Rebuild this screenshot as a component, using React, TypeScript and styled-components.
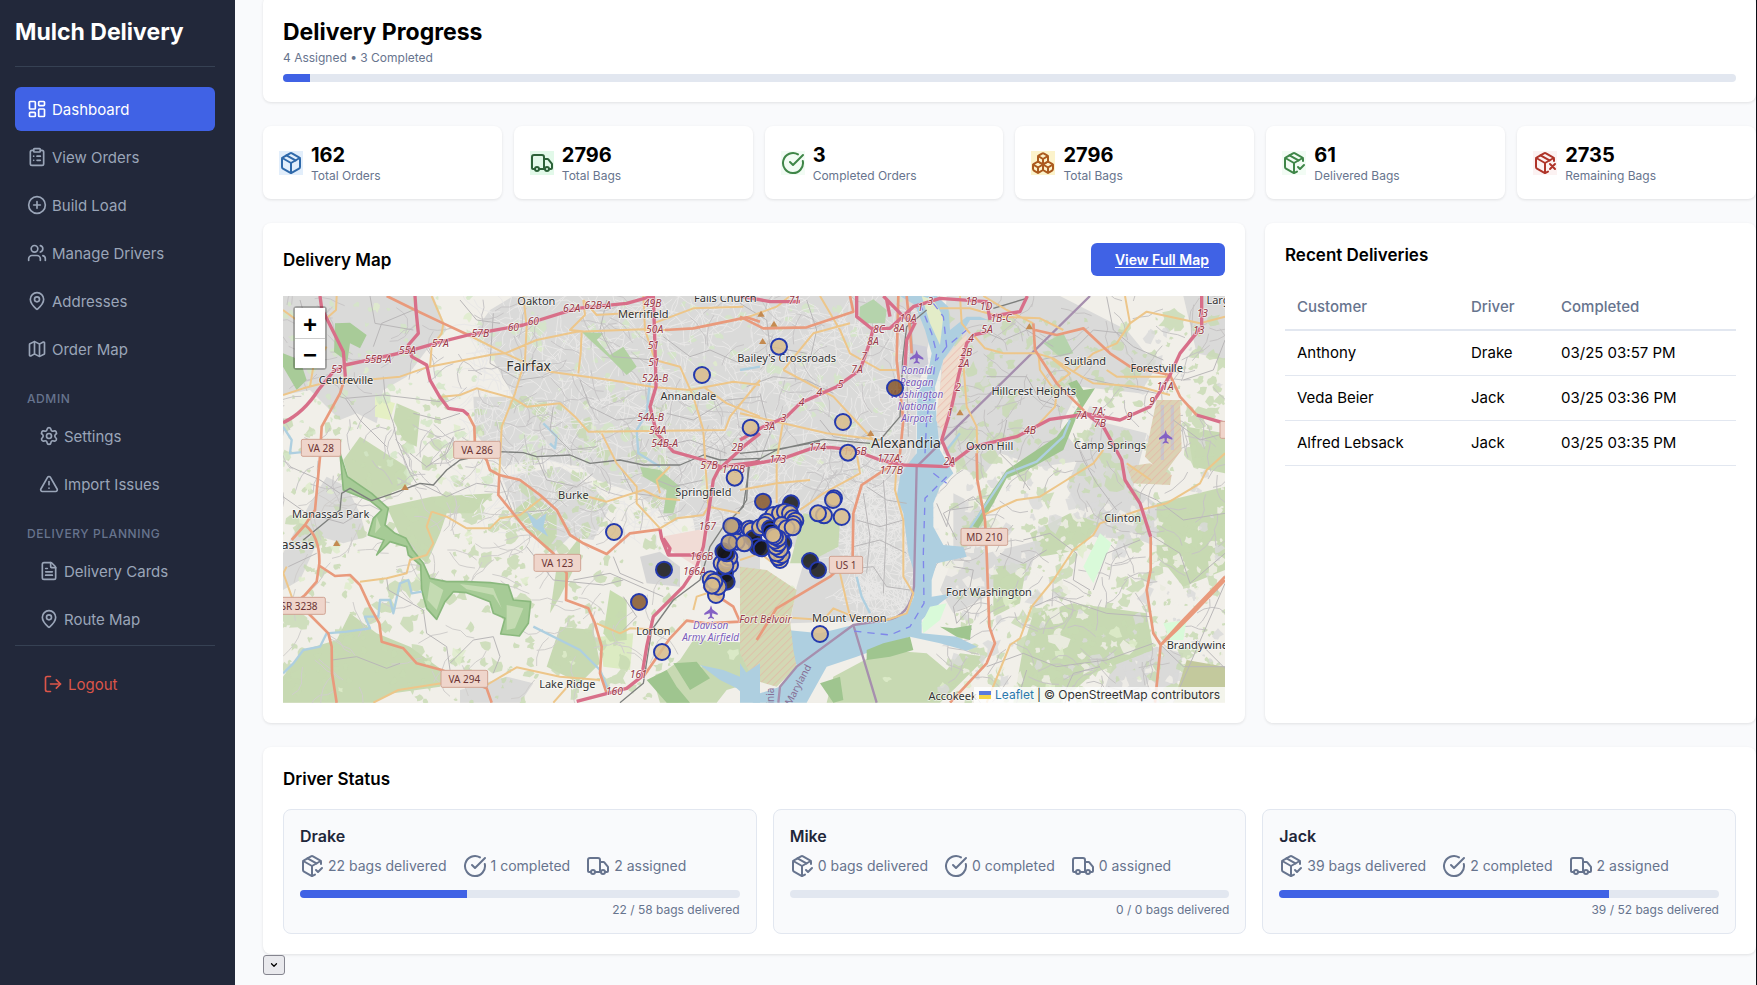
import React from 'react';
import styled, { createGlobalStyle, css } from 'styled-components';
import {
  Boxes, ChevronDown, CircleCheckBig, CirclePlus, ClipboardList, FileText, LayoutDashboard, LogOut,
  Map as MapIcon, MapPin, Package, PackageCheck, PackageX, Settings, TriangleAlert, Truck, Users,
} from 'lucide-react';

const color = {
  navy: '#22283a',
  line: '#364153',
  primary: '#4062e5',
  page: '#f9fafc',
  muted: '#67748e',
  faint: '#9aa5b8',
  track: '#e2e7f0',
  ink: '#1f273a',
  danger: '#dc5549',
};

const GlobalStyle = createGlobalStyle`
  *, *::before, *::after { box-sizing: border-box; }
  body {
    margin: 0;
    background: ${color.page};
    color: #000;
    font-family: Inter, "Noto Sans", sans-serif;
    font-size: 15px;
  }
  h1, h2, h3, p, ul { margin: 0; padding: 0; }
`;

const Shell = styled.div`
  display: flex;
  min-height: 100vh;
  overflow: hidden;
`;

const Sidebar = styled.aside`
  flex: 0 0 235px;
  padding: 16px 20px 16px 15px;
  background: ${color.navy};
`;

const Brand = styled.div`
  padding-bottom: 18px;
  margin-bottom: 20px;
  border-bottom: 1px solid ${color.line};
  color: #fff;
  font-size: 23px;
  font-weight: 700;
  line-height: 32px;
`;

const NavList = styled.ul`
  display: flex;
  flex-direction: column;
  gap: 4px;
  list-style: none;
`;

const NavSection = styled.li`
  padding: 16px 12px 4px;
  color: ${color.muted};
  font-size: 12px;
  font-weight: 500;
  line-height: 15px;
  letter-spacing: 0.05em;
`;

const NavLink = styled.a<{ $active?: boolean; $nested?: boolean }>`
  display: flex;
  align-items: center;
  gap: 5px;
  height: 44px;
  padding: 0 12px;
  border-radius: 6px;
  color: ${color.faint};
  font-size: 15px;
  text-decoration: none;
  ${(p) => p.$nested && css`padding-left: 24px;`}
  ${(p) => p.$active && css`background: ${color.primary}; color: #fff;`}
`;

const LogoutArea = styled.div`
  margin-top: 4px;
  padding: 16px 0 0 16px;
  border-top: 1px solid ${color.line};
`;

const LogoutButton = styled.button`
  display: flex;
  align-items: center;
  gap: 5px;
  height: 44px;
  padding: 0 12px;
  border: 0;
  background: none;
  color: ${color.danger};
  font: inherit;
  font-size: 15px;
`;

const Main = styled.main`
  flex: 1;
  min-width: 0;
  margin-top: -4px;
  padding-left: 28px;
  border-right: 1px solid #0c0f16;
`;

const Stack = styled.div`
  display: flex;
  flex-direction: column;
  gap: 24px;
`;

const Card = styled.section`
  min-width: 0;
  padding: 20px;
  border-radius: 8px;
  background: #fff;
  box-shadow: 0 1px 3px rgba(0, 0, 0, 0.1);
`;

const PageTitle = styled.h1`
  font-size: 23px;
  font-weight: 700;
  line-height: 32px;
`;

const Summary = styled.p`
  margin-bottom: 6px;
  color: ${color.muted};
  font-size: 12px;
  line-height: 20px;
`;

const Track = styled.div`
  height: 8px;
  overflow: hidden;
  border-radius: 4px;
  background: ${color.track};
`;

const Fill = styled.div`
  height: 100%;
  background: ${color.primary};
`;

const StatGrid = styled.div`
  display: grid;
  grid-template-columns: repeat(6, minmax(0, 1fr));
  gap: 12px;
`;

const StatCard = styled(Card)`
  display: flex;
  align-items: center;
  gap: 8px;
  padding: 16px 16px 15px;
`;

const StatIcon = styled.span<{ $fg: string; $bg: string }>`
  display: flex;
  color: ${(p) => p.$fg};
  background: ${(p) => p.$bg};
`;

const StatValue = styled.div`
  font-size: 20px;
  font-weight: 700;
  line-height: 26px;
`;

const StatLabel = styled.div`
  color: ${color.muted};
  font-size: 12px;
  line-height: 16px;
`;

const Columns = styled.div`
  display: grid;
  grid-template-columns: minmax(0, 2fr) minmax(0, 1fr);
  gap: 20px;
`;

const CardHeader = styled.div`
  display: flex;
  align-items: center;
  justify-content: space-between;
  margin-bottom: 20px;
`;

const CardTitle = styled.h2`
  font-size: 17px;
  font-weight: 600;
  line-height: 24px;
`;

const SpacedTitle = styled(CardTitle)`
  margin-bottom: 18px;
`;

const MapLink = styled.a`
  padding: 0 16px 0 24px;
  border-radius: 6px;
  background: ${color.primary};
  color: #fff;
  font-size: 14px;
  font-weight: 600;
  line-height: 33px;
  text-underline-offset: 2px;
`;

const MapFrame = styled.div`
  position: relative;
  height: 407px;
  overflow: hidden;
`;

const MapCanvas = styled.svg`
  display: block;
  width: 100%;
  height: 100%;
`;

const ZoomControl = styled.div`
  position: absolute;
  top: 10px;
  left: 10px;
  display: flex;
  flex-direction: column;
  border: 2px solid rgba(0, 0, 0, 0.25);
  border-radius: 4px;
`;

const ZoomButton = styled.button`
  width: 30px;
  height: 30px;
  padding: 3px 0 0;
  border: 0;
  background: #fff;
  color: #000;
  font: bold 24px/26px "Liberation Sans", sans-serif;
  & + & { border-top: 1px solid #ccc; }
`;

const Attribution = styled.div`
  position: absolute;
  right: 0;
  bottom: 0;
  display: flex;
  align-items: center;
  gap: 3px;
  padding: 0 5px;
  background: rgba(255, 255, 255, 0.8);
  color: #333;
  font-size: 12px;
  line-height: 16px;
  a { display: flex; align-items: center; gap: 4px; color: #2a78ad; text-decoration: none; }
`;

const Table = styled.table`
  width: 100%;
  border-collapse: collapse;
  table-layout: fixed;
  text-align: left;
  font-size: 15px;
  line-height: 20px;
`;

const Th = styled.th<{ $width?: string }>`
  width: ${(p) => p.$width ?? 'auto'};
  padding: 12px;
  border-bottom: 2px solid ${color.track};
  color: ${color.muted};
  font-weight: 500;
`;

const Td = styled.td`
  padding: 12px;
  border-bottom: 1px solid ${color.track};
`;

const DriverGrid = styled.div`
  display: grid;
  grid-template-columns: repeat(3, minmax(0, 1fr));
  gap: 16px;
`;

const DriverCard = styled.article`
  padding: 16px;
  border: 1px solid ${color.track};
  border-radius: 8px;
  background: ${color.page};
`;

const DriverName = styled.h3`
  margin-bottom: 8px;
  color: ${color.ink};
  font-size: 16px;
  font-weight: 600;
  line-height: 20px;
`;

const DriverFacts = styled.div`
  display: flex;
  gap: 16px;
  margin-bottom: 12px;
`;

const Fact = styled.span`
  display: flex;
  align-items: center;
  gap: 4px;
  color: ${color.muted};
  font-size: 14px;
  line-height: 24px;
  white-space: nowrap;
`;

const DriverCaption = styled.p`
  margin-top: 4px;
  color: ${color.muted};
  font-size: 12px;
  line-height: 15px;
  text-align: right;
`;

const MenuPicker = styled.label`
  display: grid;
  width: 22px;
  height: 20px;
  margin-top: 1px;
  place-items: center;
  > * { grid-area: 1 / 1; }
  svg { pointer-events: none; }
`;

const MenuSelect = styled.select`
  width: 22px;
  height: 20px;
  padding: 0;
  appearance: none;
  border: 1px solid #85858f;
  border-radius: 3px;
  background: #e9e9ed;
`;

/* ---------- map drawing ---------- */

type Kind = 'motorway' | 'primary' | 'secondary' | 'minor' | 'rail' | 'border' | 'ferry' | 'stream';

const lineStyle: Record<Kind, { stroke: string; width: number; dash?: string }> = {
  minor: { stroke: '#b9b7b8', width: 3 },
  stream: { stroke: '#aecfe0', width: 7 },
  rail: { stroke: '#7d7f7d', width: 4 },
  secondary: { stroke: '#edc68a', width: 6 },
  primary: { stroke: '#e99a7c', width: 8 },
  motorway: { stroke: '#d86f89', width: 10 },
  border: { stroke: '#a68fae', width: 7 },
  ferry: { stroke: '#7f86ea', width: 4, dash: '22 18' },
};

const layerOrder: Kind[] = ['stream', 'minor', 'border', 'ferry', 'rail', 'secondary', 'primary', 'motorway'];

type Lines = Record<Kind, string[]>;

const westLines: Lines = {
  stream: [
    'M69 1180 L100 1150 L130 1110 L180 1100 L200 1060 L260 1055 L330 1045 L315 1010 L355 1010 L360 960 L390 960 L400 1000 L420 910 L445 900 L455 940 L485 935',
    'M820 1040 L900 1080 L960 1110 L1020 1170 L1045 1230',
    'M1170 300 L1160 400 L1130 450 L1135 520 L1200 560',
    'M850 430 L890 470 L885 505 L870 490',
    'M69 440 L95 480 L90 520 L140 515',
  ],
  minor: [
    'M256 355 L370 345 L540 365', 'M370 345 L400 430 L410 480 L450 580 L470 610', 'M240 350 L256 355 L300 420 L380 500',
    'M460 400 L540 420 L600 400', 'M450 520 L500 560 L560 520 L580 470', 'M480 610 L560 650 L650 610 L720 620',
    'M90 560 L180 600 L240 640', 'M69 650 L140 700 L250 730 L300 700', 'M85 860 L170 820', 'M216 1140 L290 1130 L380 1165 L420 1150',
    'M380 895 L385 930 L490 990 L500 1060 L560 1100 L570 1170', 'M570 1150 L640 1080 L700 1070 L720 1130 L700 1180',
    'M800 800 L880 900 L1030 915 L1090 900', 'M1060 830 L1080 880 L1150 910', 'M940 900 L1050 880 L1210 950',
    'M720 600 L760 700 L860 690 L940 620', 'M1090 950 L1130 1010 L1090 1050', 'M120 60 L140 130 L115 160', 'M330 48 L345 130 L460 150',
    'M340 200 L365 130 L460 90', 'M370 290 L375 345', 'M700 100 L690 250 L780 300 L850 290', 'M600 60 L650 120 L720 130',
    'M1040 60 L1020 150 L1060 230 L1180 240', 'M960 300 L990 380 L1070 420 L1160 410', 'M880 380 L870 450 L930 510 L1010 500',
    'M830 530 L860 600 L950 620 L1000 580', 'M1210 170 L1290 230 L1350 210 L1440 250', 'M1220 400 L1300 420 L1400 360 L1500 350',
    'M1190 600 L1240 620 L1330 600', 'M1200 500 L1290 480 L1400 520', 'M1080 560 L1120 640 L1200 650',
  ],
  border: [],
  ferry: [],
  rail: [
    'M130 780 L240 690 L245 640 L270 625 L335 662 L400 640 L480 610 L520 615 L560 570 L600 540 L720 515 L790 518 L830 530 L930 525 L990 550 L1080 540 L1150 555 L1260 555 L1330 525 L1380 540 L1500 535',
    'M1080 1268 L1150 1210 L1175 1050 L1240 960 L1320 900 L1350 800 L1390 740 L1450 680 L1468 560',
  ],
  secondary: [
    'M69 345 L130 325 L180 312 L420 290 L500 262 L690 225 L735 220 L830 180 L950 155 L1150 148 L1215 150',
    'M625 165 L735 220 L800 250 L870 275 L1050 300 L1185 322 L1290 330 L1420 305 L1500 315',
    'M545 350 L600 345 L650 325 L760 355 L800 380 L900 370 L945 410 L985 455 L1395 450 L1410 410 L1500 300',
    'M790 48 L800 140 L795 240 L765 340 L725 440 L718 585',
    'M1150 48 L1155 150 L1185 240 L1260 260 L1300 350 L1330 450 L1338 580 L1345 680',
    'M1025 460 L1070 550 L1130 620 L1130 670 L1200 745 L1250 715 L1330 705 L1345 680 L1440 700',
    'M985 650 L1040 665 L1150 630 L1200 655 L1260 660',
    'M515 695 L560 710 L620 745 L690 745 L720 715 L780 705 L850 650',
    'M515 695 L500 740 L520 790 L500 825 L450 840 L440 880 L380 895 L300 905',
    'M340 1268 L415 1230 L545 1210 L680 1215 L770 1162 L900 1190 L1020 1200',
    'M965 155 L962 220 L955 280', 'M515 48 L550 130 L545 160 L515 200 L510 262', 'M150 320 L160 260 L200 200',
    'M230 48 L228 90 L200 115', 'M69 90 L110 120', 'M980 155 L930 150 L975 105 L970 60', 'M80 860 L70 880 L97 955',
    'M1010 1030 L1080 1060 L1110 1045 L1230 1050', 'M1200 640 L1190 600 L1230 560', 'M1180 130 L1300 85 L1450 80',
    'M1300 990 L1310 950 L1370 930', 'M970 60 L1010 105 L1170 95', 'M1330 320 L1400 370 L1500 410', 'M880 1268 L940 1200',
  ],
  primary: [
    'M380 48 L465 90 L550 130 L625 165', 'M256 290 L240 340 L185 440 L180 530 L165 690 L135 735 L95 780',
    'M135 735 Q180 770 178 850 L170 905 L135 945 L110 965 L150 1005 L205 1060 L215 1100 L216 1180 L230 1268',
    'M175 855 L225 888 L270 885 L300 915 L330 980 L358 1030 L365 1085 L430 1105 L470 1150 L545 1170 L680 1225 L695 1268',
    'M718 585 L715 645 L800 750 L880 820 L920 880 L918 960 L985 985 L1005 1030 L1025 1100 L1020 1180 L1040 1240',
    'M622 400 L643 440 L645 500 L680 540 L690 570 L718 585 L780 600 L840 645 L890 690 L930 765 L970 790 L1040 822 L1110 760 L1200 748',
    'M1215 150 L1300 145 L1460 112 L1500 125', 'M1150 1190 L1230 1075 L1280 1022 L1340 1030 L1440 1025 L1420 980 L1330 920',
  ],
  motorway: [
    'M180 48 L185 85 L205 125 L250 215 L256 290', 'M69 428 Q130 400 175 330 L220 275 L256 255 L440 215 L545 185 L625 165 L790 135 L950 85 L1100 70 L1180 48',
    'M465 48 L468 90 L475 160 L445 195 L455 230 L500 255 L510 300 L540 352 L565 385 L610 392 L625 405',
    'M1180 48 L1185 200 L1188 320 L1170 380 L1190 460 L1240 515 L1330 540 L1380 560 L1500 545',
    'M1380 560 L1360 600 L1345 700 L1330 800 L1310 860 L1270 920 L1180 1010 L1160 1100 L1145 1190 L1100 1225 L950 1264',
    'M1375 570 L1450 500 L1500 460', 'M1200 748 L1205 775 L1225 825 L1320 825', 'M1210 775 L1230 805 L1225 825',
  ],
};

const eastLines: Lines = {
  stream: ['M680 940 L740 850 L800 760 L890 725 L970 650 L990 600', 'M350 1070 L365 1130 L390 1180', 'M0 450 L60 440', 'M620 690 L660 640'],
  minor: [
    'M0 250 L80 300 L90 380 L200 400', 'M20 500 L100 470 L200 480 L280 520', 'M60 520 L90 640 L60 720', 'M200 240 L230 330 L210 420',
    'M240 600 L280 650 L340 660 L400 640', 'M380 800 L440 840 L500 850', 'M350 900 L420 920 L490 900', 'M340 980 L420 960 L500 1000',
    'M300 1050 L400 1040 L440 1100 L510 1110', 'M370 820 L390 950 L380 1060', 'M430 780 L440 900 L430 1120', 'M510 260 L520 420', 'M500 420 L505 650',
    'M590 850 L620 920 L630 870 L700 860', 'M650 960 L610 880 L700 830 L735 870', 'M640 1040 L700 1050 L690 1100 L640 1160 L650 1210 L730 1120',
    'M720 330 L790 360 L860 330 L940 380', 'M740 470 L860 470 L900 540 L960 560', 'M800 600 L780 700 L820 740 L870 810', 'M900 420 L990 400 L1060 330 L1150 340',
    'M1100 230 L1120 330 L1180 380 L1270 420', 'M1020 470 L1150 500 L1250 520', 'M1000 640 L1030 720 L1070 790 L1130 870', 'M850 960 L930 940 L1010 1000 L1000 1080 L1050 1110',
    'M780 1000 L850 1030 L920 990', 'M880 1160 L950 1130 L1100 1180 L1230 1190', 'M740 1340 L850 1300 L950 1340 L1100 1320 L1240 1270', 'M830 1448 L860 1350',
    'M1160 800 L1250 840 L1330 900 L1455 880', 'M1240 950 L1320 1000 L1350 1090 L1455 1000', 'M1300 600 L1380 660 L1455 640', 'M1330 480 L1420 450 L1455 360',
    'M1060 1110 L1100 1000 L1200 960', 'M960 1448 L1000 1360 L1080 1340', 'M1262 1275 L1330 1340 L1455 1340', 'M1300 1448 L1455 1090', 'M1370 1260 L1455 1345',
  ],
  border: ['M1050 228 L530 740 L522 1100 Q510 1190 440 1200 L340 1215 L170 1340 L120 1400 L115 1448', 'M340 1215 L410 1448'],
  ferry: ['M540 250 L575 340 L590 400 L560 600 L555 700', 'M580 250 L610 290 L620 380 L680 330', 'M620 380 L590 420', 'M620 770 L555 835 L550 1000 L552 1150 L510 1220 L450 1245 L330 1232', 'M580 760 L620 790'],
  rail: ['M0 870 L20 840 L25 735 L110 690 L250 658 L390 670', 'M560 270 L500 320 L488 420 L480 590 L420 660', 'M0 700 L100 690 L240 665', 'M760 265 L860 235'],
  secondary: [
    'M0 300 L110 260 L150 228', 'M240 228 L300 330 L330 400 L420 450 L470 450', 'M130 450 L220 340 L330 310', 'M130 450 L280 530 L400 660', 'M0 580 L130 610 L260 640 L420 660',
    'M130 600 L110 720 L110 850', 'M0 810 L110 790 L210 780', 'M350 700 L360 760 L250 820 L180 870', 'M470 735 L465 810 L490 900 L490 1070 L520 1120 L500 1180 L440 1200 L330 1190 L300 1060',
    'M0 1020 L60 1000 L100 1030', 'M110 1190 L250 1200 L280 1165 L340 1190', 'M660 228 L665 310 L690 340', 'M600 265 L690 265 L780 290 L900 295 L970 330',
    'M700 345 L735 385 L790 400 L890 400 L940 415 L1000 455 L1060 490 L1200 500 L1290 525', 'M670 430 L680 560 L710 620 L712 700', 'M895 400 L900 450 L950 520 L945 560 L870 640',
    'M730 228 L800 270 L880 310', 'M1155 228 L1170 310 L1130 370 L1060 400 L1000 455', 'M1170 310 L1220 275 L1380 310 L1455 290', 'M730 885 L830 840 L900 830 L980 780 L1060 730 L1090 690',
    'M740 1448 L810 1275 L840 1255 L875 1160 L940 1080 L1000 990 L1060 945 L1080 910 L1200 870 L1280 850 L1380 790 L1400 750 L1455 700', 'M1232 780 L1160 730',
    'M935 415 L990 460 L950 490', 'M1100 450 L1130 470 L1290 470',
  ],
  primary: [
    'M475 228 L470 420 L490 600 L480 700 L440 745 L365 795 L340 880 L338 1010 L270 1070 L110 1165 L50 1260', 'M0 290 L70 325 L200 322 L340 275 L330 228',
    'M710 700 L712 780 L735 900 L740 1000 L748 1220 L765 1270 L740 1330 L630 1448', 'M880 310 L885 390 L950 490 L1040 580', 'M885 330 L950 345 L1030 325 L1110 400 L1170 440 L1290 465 L1320 530 L1370 585',
    'M1232 950 L1232 1050 L1220 1110 L1240 1240 L1262 1275 L1245 1448', 'M1262 1275 L1320 1210 L1455 1070', 'M1455 1080 L1350 1190 L1310 1230 L1262 1275', 'M500 228 L510 330 L515 400',
  ],
  motorway: [
    'M0 740 L130 715 L215 685 L270 682 L340 690 L420 720 L490 735 L620 740 L700 680 L830 650 L930 598 L1040 582 L1140 600 L1230 560 L1270 500 L1290 465 L1320 400 L1385 320 L1385 228',
    'M0 660 L70 620 L140 590 L180 550 L290 500 L360 450 L385 380 L400 325 L450 325 L520 260 L600 235 L740 245 L750 300', 'M350 228 L350 290 L400 330', 'M430 228 L490 290 L525 310 L500 360 L495 440',
    'M640 740 L605 660 L635 560 L655 470 L680 370 L700 345 L745 335', 'M745 290 L840 275 L862 228', 'M1040 582 L1090 620 L1145 720 L1155 780 L1200 850 L1232 950', 'M1370 585 L1455 610', 'M440 240 L450 290', 'M0 228 L90 245 L180 245',
  ],
};

type Area = [string, string];

const westAreas: Area[] = [
  ['#dadad9', 'M69 48 H520 L560 150 L500 210 L440 290 L370 330 L350 430 L290 400 L240 420 L150 330 L69 345 Z'],
  ['#dadad9', 'M690 90 L760 48 H1510 V720 L1340 690 L1230 720 L1130 640 L1010 600 L960 560 L830 535 L730 560 L645 460 L640 350 L760 350 L700 240 L640 160 Z'],
  ['#dadad9', 'M725 590 L900 560 L1000 620 L1050 680 L1000 780 L930 770 L880 820 L850 760 L760 680 Z'],
  ['#dadad9', 'M150 670 L200 590 L260 620 L300 700 L320 770 L250 790 L180 770 L120 900 L69 930 V820 Z'],
  ['#d6d6d6', 'M1140 830 L1200 815 L1260 860 L1260 920 L1160 910 Z'],
  ['#dadad9', 'M1230 560 L1500 560 V940 L1330 900 L1300 720 Z'],
  ['#dadad9', 'M600 1230 L740 1190 L820 1210 L780 1268 H600 Z'],
  ['#c7d9b2', 'M410 370 L480 400 L470 500 L430 480 L400 420 Z'],
  ['#e5f0c4', 'M345 350 L405 370 L390 420 L345 410 Z M300 560 L350 520 L370 580 L410 570 L390 610 L310 610 Z'],
  ['#c7d9b2', 'M250 540 L300 470 L440 560 L440 620 L335 660 L280 640 Z'],
  ['#c7d9b2', 'M380 680 L515 650 L700 640 L640 700 L560 700 L540 760 L500 850 L430 790 Z'],
  ['#c7d9b2', 'M750 700 L820 645 L890 700 L890 770 L860 810 Z'],
  ['#c7d9b2', 'M270 1000 L350 1060 L450 1100 L560 1180 L540 1220 L400 1240 L340 1268 H69 V1190 L130 1110 L230 1080 Z'],
  ['#c7d9b2', 'M890 860 L960 770 L960 830 L900 950 L870 1000 Z'],
  ['#dcebc2', 'M1020 1070 L1120 1060 L1110 1170 L1030 1160 Z'],
  ['#c7d9b2', 'M900 1040 L1000 1050 L1020 1150 L960 1210 L860 1160 Z'],
  ['#c7dcaf', 'M1050 930 L1100 960 L1100 1080 L1050 1085 L1030 1060 Z'],
  ['#c7d9b2', 'M1180 1200 L1260 1140 L1300 1080 L1500 1090 V1200 L1400 1230 L1370 1268 H1200 Z'],
];

/* Parks and water that stay clear of the street texture. */
const westTop: Area[] = [
  ['#f1dcd6', 'M1205 770 L1340 745 L1310 860 L1230 810 Z'],
  ['#aecfe0', 'M800 695 L830 720 L860 700 L850 740 L865 770 L820 740 Z'],
  ['#a8cb98', 'M225 130 L270 128 L320 165 L300 205 L270 190 L262 245 L222 215 Z M69 220 L120 240 L140 300 L110 330 L69 260 Z'],
  ['#b2d1a2', 'M965 155 L1030 160 L1010 180 L1050 225 L1090 200 L1130 260 L1100 285 L1050 235 L990 180 Z'],
  ['#b2d1a2', 'M1140 560 L1200 570 L1260 620 L1240 700 L1210 700 L1220 630 L1150 590 Z'],
  ['#9fc58f', 'M1160 1200 L1220 1170 L1250 1220 L1290 1268 H1220 Z M1240 1150 L1310 1145 L1350 1195 L1290 1230 Z'],
  ['#aecfe0', 'M1320 1155 L1390 1170 L1440 1190 L1500 1150 V1268 H1480 L1430 1225 L1380 1200 Z'],
];

const occoquanPark = 'M240 520 L262 590 L335 640 L385 685 L375 735 L405 760 L438 775 L458 810 L490 850 L510 895 L560 905 L620 905 L690 908 L745 915 L760 960 L812 965 L805 1030 L778 1068 L722 1062 L735 1015 L700 1000 L690 965 L620 938 L580 935 L555 965 L530 1018 L500 985 L485 930 L482 855 L445 825 L440 800 L390 785 L350 825 L372 780 L325 765 L340 715 L365 690 L330 662 L250 630 Z';
const occoquanInner = 'M510 905 L550 930 L530 990 L502 960 Z M600 912 L700 925 L725 985 L700 945 L620 928 Z M740 975 L790 985 L765 1045 L740 1050 Z M350 710 L362 740 L345 760 Z';

const hunterPark = 'M985 490 L1010 480 L1030 510 L1065 505 L1010 590 L970 690 L880 740 L800 775 L760 850 L715 925 L695 918 L745 830 L800 750 L950 650 L995 590 L1020 550 Z';
const southParks = 'M600 1220 L640 1225 L695 1215 L690 1260 L650 1250 Z M380 1290 L430 1270 L510 1250 L520 1290 L450 1310 L380 1320 Z M240 1390 L300 1370 L310 1440 L280 1448 Z';
const belvoir = 'M0 1040 L80 1050 L170 1110 L150 1200 L160 1290 L170 1340 L110 1400 L40 1380 L0 1300 Z';
const andrews = 'M1250 540 L1320 540 L1325 690 L1270 765 L1215 710 Z M1160 740 L1230 730 L1295 765 L1290 795 L1180 790 Z';
const bolling = 'M610 420 L680 340 L680 400 L640 560 L610 640 L588 600 Z';
const potomac = 'M480 228 L525 255 L555 330 L575 400 L560 480 L532 520 L530 700 L482 760 L470 830 L490 880 L505 1000 L520 1050 L522 1130 L500 1180 L440 1205 L340 1215 L240 1240 L140 1230 L150 1290 L172 1340 L120 1400 L60 1420 L0 1330 V1448 H200 L260 1340 L350 1310 L430 1280 L510 1250 L600 1270 L680 1292 L712 1280 L650 1250 L545 1240 L545 1200 L600 1150 L640 1120 L575 1130 L575 1080 L590 1030 L680 1010 L670 980 L610 975 L580 920 L580 850 L600 800 L640 760 L600 690 L590 600 L585 500 L610 420 L660 350 L690 300 L745 300 L720 290 L680 290 L630 330 L625 260 L590 228 Z';

const eastAreas: Area[] = [
  ['#dadad9', 'M0 228 H600 L530 520 L520 1180 L440 1200 L150 1210 L170 1100 L200 1000 L0 900 Z'],
  ['#dadad9', 'M620 228 H960 L1160 330 L1250 440 L1200 520 L1020 500 L960 620 L1040 720 L900 740 L780 700 L720 780 L610 700 L600 500 Z'],
  ['#dadad9', 'M1060 600 L1220 640 L1180 800 L1260 860 L1400 900 L1300 1000 L1200 960 L1060 950 L980 800 Z'],
  ['#dadad9', 'M640 820 L720 860 L740 1000 L900 960 L860 1080 L740 1130 L640 1180 L600 1110 L640 1010 Z'],
  ['#dadad9', 'M1120 1330 L1250 1280 L1330 1300 L1300 1448 H1080 Z'],
  ['#dadad9', 'M1330 228 H1455 V420 L1370 400 Z'],
  ['#c7d9b2', 'M870 940 L990 880 L1080 910 L1020 990 L900 1010 Z M760 1040 L860 1030 L840 1150 L760 1190 Z'],
  ['#c7d9b2', 'M880 1180 L1000 1150 L1220 1180 L1240 1290 L1060 1360 L960 1448 H820 L850 1280 Z'],
  ['#c7d9b2', 'M430 1290 L560 1300 L620 1350 L660 1300 L740 1310 L650 1400 L600 1448 H260 L280 1370 Z'],
  ['#c7d9b2', 'M1250 850 L1455 800 V1050 L1330 1100 L1250 1000 Z M1340 620 L1455 640 V760 L1360 740 Z'],
];

const eastTop: Area[] = [
  ['#b5d3ac', 'M360 260 L400 238 L440 270 L435 310 L380 310 L358 290 Z M910 370 L970 340 L1000 400 L960 410 Z'],
  ['#aecfe0', potomac],
  ['#e3ecc8', 'M545 228 L580 240 L610 290 L600 375 L570 310 Z'],
  ['#efdccd', bolling],
  ['#cfcfd8', 'M510 370 L560 380 L565 430 L540 475 L505 460 Z'],
  ['#c7d9b2', 'M190 880 L300 900 L295 980 L200 1030 L150 1030 Z'],
  ['#d3d8b4', belvoir],
  ['#dbd2b4', andrews],
  ['#c9c6cc', 'M1262 555 L1272 555 L1272 720 L1262 720 Z M1292 555 L1302 555 L1302 690 L1292 690 Z'],
  ['#c3c99d', 'M1340 1320 L1455 1340 V1448 H1300 Z'],
  ['#9fc58f', hunterPark],
  ['#9fc58f', southParks],
  ['#d9fad9', 'M570 1160 L620 1150 L600 1200 L550 1240 L545 1210 Z M1080 940 L1115 970 L1060 1090 L1030 1040 Z M1270 1210 L1340 1200 L1330 1260 L1290 1260 Z'],
];

/* Repeatable pseudo-random scatter for woodland patches and street texture. */
function scatter(seed: number) {
  let s = seed;
  return () => {
    s = (s * 16807) % 2147483647;
    return s / 2147483647;
  };
}

function makePatches(seed: number, count: number, box: [number, number, number, number], max = 26) {
  const rnd = scatter(seed);
  let d = '';
  for (let i = 0; i < count; i += 1) {
    const x = box[0] + rnd() * box[2];
    const y = box[1] + rnd() * box[3];
    const size = 5 + rnd() * rnd() * max;
    for (let k = 0; k < 9; k += 1) {
      const a = (k / 9) * Math.PI * 2;
      const r = size * (0.4 + rnd() * 0.9);
      d += `${k ? 'L' : 'M'}${Math.round(x + Math.cos(a) * r)} ${Math.round(y + Math.sin(a) * r)}`;
    }
    d += 'Z';
  }
  return d;
}

function makeStreets(seed: number, count: number, box: [number, number, number, number]) {
  const rnd = scatter(seed);
  let d = '';
  for (let i = 0; i < count; i += 1) {
    let x = box[0] + rnd() * box[2];
    let y = box[1] + rnd() * box[3];
    let a = rnd() * Math.PI * 2;
    d += `M${Math.round(x)} ${Math.round(y)}`;
    for (let k = 0; k < 4; k += 1) {
      a += (rnd() - 0.5) * 1.2;
      x += Math.cos(a) * 24;
      y += Math.sin(a) * 24;
      d += `L${Math.round(x)} ${Math.round(y)}`;
    }
  }
  return d;
}

const woods: Area[] = [
  ['#c7d9b2', makePatches(11, 460, [0, 300, 1180, 920])],
  ['#c7d9b2', makePatches(23, 620, [1990, 60, 836, 1160])],
  ['#d3e6c6', makePatches(37, 300, [0, 0, 1850, 560], 20)],
  ['#f1efe9', makePatches(41, 220, [2000, 560, 826, 640])],
  ['#dfeccb', makePatches(59, 90, [0, 0, 2826, 1200])],
  ['#dadad9', makePatches(61, 190, [1950, 100, 876, 1100])],
];

const streets: [string, string][] = [
  ['#e9e8e7', makeStreets(5, 900, [560, 0, 1330, 700])],
  ['#e9e8e7', makeStreets(15, 260, [1700, 560, 180, 400])],
  ['#c8c6c7', makeStreets(7, 230, [0, 0, 1850, 640])],
  ['#c6c4c4', makeStreets(17, 190, [1980, 0, 846, 1221])],
  ['#d0cecc', makeStreets(29, 110, [0, 560, 1150, 640])],
];

type Label = [number, number, string, number?];

const westPlaces: Label[] = [
  [829, 75, 'Oakton'], [1150, 114, 'Merrifield'], [1396, 66, 'Falls Church'], [806, 272, 'Fairfax', 42], [258, 312, 'Centreville'],
  [1285, 360, 'Annandale'], [940, 657, 'Burke'], [1330, 647, 'Springfield'], [212, 714, 'Manassas Park'], [73, 806, 'Manassas', 39],
  [1180, 1065, 'Lorton'], [922, 1225, 'Lake Ridge'],
];

const eastPlaces: Label[] = [
  [140, 427, "Bailey's Crossroads"], [1035, 436, 'Suitland'], [1250, 456, 'Forestville'], [881, 525, 'Hillcrest Heights'],
  [498, 684, 'Alexandria', 42], [749, 691, 'Oxon Hill'], [1110, 688, 'Camp Springs'], [1148, 905, 'Clinton'],
  [747, 1128, 'Fort Washington'], [328, 1206, 'Mount Vernon'], [1372, 1288, 'Brandywine'], [638, 1440, 'Accokeek'], [1444, 252, 'Largo'],
];

const westExits: Label[] = [
  [935, 96, '62A'], [1013, 86, '62B-A'], [1178, 82, '49B'], [760, 152, '60'], [820, 136, '60'], [661, 172, '57B'], [541, 202, '57A'],
  [442, 222, '55A'], [354, 248, '55B-A'], [230, 280, '53'], [1184, 158, '50A'], [1180, 207, '51'], [1182, 259, '51'], [1185, 307, '52A-B'],
  [1172, 424, '54A-B'], [1193, 462, '54A'], [1214, 501, '54B-A'], [1432, 514, '2B'], [1347, 566, '57B'], [1420, 578, '170B'],
  [1342, 751, '167'], [1325, 839, '166B'], [1303, 886, '166A'], [1135, 1195, '161'], [1063, 1246, '160'],
];

const eastExits: Label[] = [
  [163, 253, '71'], [541, 272, '1'], [571, 256, '3'], [694, 256, '1B'], [738, 269, '1D'], [504, 306, '10A'], [783, 305, '1B-C'], [417, 338, '8C'],
  [477, 336, '8A'], [741, 340, '5A'], [399, 376, '8A'], [693, 367, '4'], [679, 408, '2B'], [671, 440, '2A'], [372, 420, '7'], [351, 459, '7A'],
  [302, 505, '5'], [238, 527, '4'], [185, 557, '4'], [131, 605, '3'], [88, 629, '3A'], [654, 512, '2'], [630, 588, '1'], [232, 693, '174'],
  [345, 704, '176B'], [113, 730, '173'], [450, 725, '177A;'], [454, 761, '177B'], [628, 736, '2A'], [870, 641, '4B'], [1024, 597, '7A'],
  [1076, 585, '7A;'], [1080, 620, '7B'], [1169, 599, '9'], [1236, 556, '9'], [1275, 509, '11A'], [1376, 343, '13'], [1387, 292, '13'], [76, 1208, 'Fort Belvoir'],
];

const airLabels: Label[] = [
  [530, 463, 'Ronald'], [530, 499, 'Reagan'], [530, 535, 'Washington'], [530, 571, 'National'], [530, 607, 'Airport'],
];

const shields: [number, number, string, number][] = [
  [183, 504, 'VA 28', 118], [651, 510, 'VA 286', 140], [892, 849, 'VA 123', 140], [613, 1197, 'VA 294', 140], [117, 978, 'SR 3238', 158],
  [1758, 855, 'US 1', 100], [2173, 771, 'MD 210', 140], [2950, 450, 'MD 4', 140],
];

const peaks: [number, number][] = [[435, 620], [230, 788], [1503, 100], [1542, 130], [1508, 182], [2308, 138], [1832, 458], [2100, 396]];

const tan = '#d8bc8c';
const brown = '#85562c';
const black = '#141419';

/* Delivery stops, in drawing order: x, y, fill. */
const stops: [number, number, string][] = [
  [1326, 285, tan], [1472, 443, tan], [1424, 593, tan], [1062, 756, tan], [1212, 869, black], [1137, 966, brown], [1206, 1116, tan],
  [1557, 200, tan], [1905, 324, brown], [1749, 426, tan], [1764, 518, tan], [1509, 665, brown], [1593, 670, black],
  [1722, 655, tan], [1719, 660, tan], [1692, 706, tan], [1674, 700, tan], [1745, 711, tan], [1650, 843, black], [1674, 870, black], [1680, 1062, tan],
  [1425, 742, tan], [1420, 738, tan], [1414, 738, '#b79d79'], [1468, 746, tan], [1474, 752, tan], [1480, 775, black], [1492, 800, black],
  [1500, 742, tan], [1540, 705, tan], [1560, 700, tan], [1575, 695, tan], [1590, 700, tan], [1598, 715, tan], [1606, 722, tan], [1600, 732, tan],
  [1520, 725, tan], [1515, 735, tan], [1530, 745, black], [1505, 805, black], [1565, 735, tan], [1580, 745, tan], [1570, 790, black],
  [1385, 850, tan], [1410, 855, tan], [1395, 880, black], [1400, 905, black], [1400, 840, tan], [1408, 832, tan], [1396, 857, tan],
  [1400, 820, black], [1390, 814, black], [1352, 898, tan], [1368, 945, tan], [1375, 920, tan], [1363, 905, tan], [1356, 917, tan],
  [1430, 785, tan], [1408, 788, '#b79d79'], [1453, 790, '#c9ad82'],
  [1560, 840, tan], [1555, 832, tan], [1565, 825, tan], [1550, 820, tan], [1560, 808, tan], [1548, 800, tan], [1555, 790, tan], [1545, 782, tan],
  [1555, 775, tan], [1532, 755, black], [1545, 770, tan], [1598, 742, tan], [1539, 765, tan],
];

const plane = 'M0 -20 L4 -8 L20 4 V9 L4 4 L3 13 L9 18 V21 L0 18 L-9 21 V18 L-3 13 L-4 4 L-20 9 V4 L-4 -8 Z';

function Labels({ items, fill, italic, size }: { items: Label[]; fill: string; italic?: boolean; size: number }) {
  return (
    <g
      fill={fill} stroke="#fff" strokeWidth={5} strokeOpacity={0.65} paintOrder="stroke" strokeLinejoin="round"
      textAnchor="middle" fontFamily='"Noto Sans", sans-serif' fontStyle={italic ? 'italic' : 'normal'}
    >
      {items.map(([x, y, text, own]) => (
        <text key={`${x}-${y}`} x={x} y={y} fontSize={own ?? size}>{text}</text>
      ))}
    </g>
  );
}

function Roads({ kind }: { kind: Kind }) {
  const s = lineStyle[kind];
  return (
    <g fill="none" stroke={s.stroke} strokeWidth={s.width} strokeDasharray={s.dash} strokeLinejoin="round">
      <path transform="translate(-69 -48)" d={westLines[kind].join(' ')} />
      <path transform="translate(1371 -228)" d={eastLines[kind].join(' ')} />
    </g>
  );
}

function Areas({ items }: { items: Area[] }) {
  return <>{items.map(([fill, d]) => <path key={d} fill={fill} d={d} />)}</>;
}

function DeliveryMap() {
  return (
    <MapCanvas viewBox="0 0 2826 1221" preserveAspectRatio="xMidYMid slice" role="img" aria-label="Map of delivery stops">
      <defs>
        <pattern id="hatch" width="16" height="16" patternUnits="userSpaceOnUse" patternTransform="rotate(45)">
          <rect width="3" height="16" fill="#e9a9a0" opacity="0.5" />
        </pattern>
      </defs>
      <rect width="2826" height="1221" fill="#f1efe9" />
      <g transform="translate(-69 -48)"><Areas items={westAreas} /></g>
      <g transform="translate(1371 -228)"><Areas items={eastAreas} /></g>
      {woods.map(([fill, d]) => <path key={fill + d.length} fill={fill} d={d} opacity="0.8" />)}
      {streets.map(([stroke, d]) => <path key={stroke + d.length} stroke={stroke} strokeWidth="3" fill="none" d={d} />)}
      <g transform="translate(1371 -228)">
        <Areas items={eastTop} />
        <g fill="url(#hatch)">
          <path d={bolling} />
          <path d={belvoir} />
          <path d={andrews} />
        </g>
      </g>
      <g transform="translate(-69 -48)">
        <Areas items={westTop} />
        <path fill="#a6cb96" stroke="#8ab87d" strokeWidth="5" strokeLinejoin="round" d={occoquanPark} />
        <path fill="#c4dbb2" d={occoquanInner} />
      </g>
      {layerOrder.map((kind) => <Roads key={kind} kind={kind} />)}
      <g transform="translate(-69 -48)" fill="#c48a50">
        {peaks.map(([x, y]) => <path key={x} d={`M${x} ${y - 8} l11 18 h-22 Z`} />)}
      </g>
      <g fill="#8461c4">
        <path transform="translate(1901 182)" d={plane} />
        <path transform="translate(2648 422)" d={plane} />
        <path transform="translate(1284 948)" d={plane} />
      </g>
      <g transform="translate(-69 -48)">
        <Labels items={westExits} fill="#973a48" italic size={31} />
        <Labels items={[[1352, 1047, 'Davison'], [1352, 1083, 'Army Airfield']]} fill="#7a5cba" italic size={30} />
        <Labels items={westPlaces} fill="#333" size={33} />
        <g fill="#efd5cb" stroke="#d0a393" strokeWidth="3">
          {shields.map(([x, y, , w]) => <rect key={x} x={x - w / 2} y={y - 26} width={w} height={51} rx={5} />)}
        </g>
        <g fill="#6b3434" fontFamily='"Noto Sans", sans-serif' fontSize="30" textAnchor="middle">
          {shields.map(([x, y, text]) => <text key={x} x={x} y={y + 11}>{text}</text>)}
        </g>
      </g>
      <g transform="translate(1371 -228)">
        <Labels items={eastExits} fill="#973a48" italic size={31} />
        <Labels items={airLabels} fill="#7a5cba" italic size={30} />
        <Labels items={eastPlaces} fill="#333" size={33} />
        <g fill="#866e94" fontFamily='"Noto Sans", sans-serif' fontSize="30">
          <text transform="translate(152 1458) rotate(-62)">Maryland</text>
          <text transform="translate(103 1510) rotate(-90)">Virginia</text>
        </g>
      </g>
      <g transform="translate(-69 -48)" stroke="#2439ad" strokeWidth="6">
        {stops.map(([x, y, fill]) => <circle key={`${x}-${y}`} cx={x} cy={y} r={24} fill={fill} fillOpacity={0.85} />)}
      </g>
    </MapCanvas>
  );
}

/* ---------- page data ---------- */

const mainNav = [
  { label: 'Dashboard', icon: LayoutDashboard, active: true },
  { label: 'View Orders', icon: ClipboardList },
  { label: 'Build Load', icon: CirclePlus },
  { label: 'Manage Drivers', icon: Users },
  { label: 'Addresses', icon: MapPin },
  { label: 'Order Map', icon: MapIcon },
];

const navSections = [
  { title: 'ADMIN', items: [{ label: 'Settings', icon: Settings }, { label: 'Import Issues', icon: TriangleAlert }] },
  { title: 'DELIVERY PLANNING', items: [{ label: 'Delivery Cards', icon: FileText }, { label: 'Route Map', icon: MapPin }] },
];

const stats = [
  { value: '162', label: 'Total Orders', icon: Package, fg: '#2f69aa', bg: '#e2eefb' },
  { value: '2796', label: 'Total Bags', icon: Truck, fg: '#2c6138', bg: '#e2f9e9' },
  { value: '3', label: 'Completed Orders', icon: CircleCheckBig, fg: '#3f8648', bg: '#f2fcf4' },
  { value: '2796', label: 'Total Bags', icon: Boxes, fg: '#ab5a1e', bg: '#fcf3cb' },
  { value: '61', label: 'Delivered Bags', icon: PackageCheck, fg: '#3f8648', bg: '#f2fcf4' },
  { value: '2735', label: 'Remaining Bags', icon: PackageX, fg: '#af3429', bg: '#fcf2f2' },
];

const deliveries = [
  ['Anthony', 'Drake', '03/25 03:57 PM'],
  ['Veda Beier', 'Jack', '03/25 03:36 PM'],
  ['Alfred Lebsack', 'Jack', '03/25 03:35 PM'],
];

const drivers = [
  { name: 'Drake', bags: 22, total: 58, completed: 1, assigned: 2 },
  { name: 'Mike', bags: 0, total: 0, completed: 0, assigned: 0 },
  { name: 'Jack', bags: 39, total: 52, completed: 2, assigned: 2 },
];

export default function App() {
  return (
    <>
      <GlobalStyle />
      <Shell>
        <Sidebar>
          <Brand>Mulch Delivery</Brand>
          <nav>
            <NavList>
              {mainNav.map(({ label, icon: Icon, active }) => (
                <li key={label}><NavLink href="#" $active={active}><Icon size={20} />{label}</NavLink></li>
              ))}
              {navSections.map((section) => (
                <React.Fragment key={section.title}>
                  <NavSection>{section.title}</NavSection>
                  {section.items.map(({ label, icon: Icon }) => (
                    <li key={label}><NavLink href="#" $nested><Icon size={20} />{label}</NavLink></li>
                  ))}
                </React.Fragment>
              ))}
            </NavList>
          </nav>
          <LogoutArea>
            <LogoutButton type="button"><LogOut size={20} />Logout</LogoutButton>
          </LogoutArea>
        </Sidebar>
        <Main>
          <Stack>
            <Card>
              <PageTitle>Delivery Progress</PageTitle>
              <Summary>4 Assigned • 3 Completed</Summary>
              <Track><Fill style={{ width: `${(3 / 162) * 100}%` }} /></Track>
            </Card>
            <StatGrid>
              {stats.map(({ value, label, icon: Icon, fg, bg }) => (
                <StatCard key={label + fg}>
                  <StatIcon $fg={fg} $bg={bg}><Icon size={24} /></StatIcon>
                  <div>
                    <StatValue>{value}</StatValue>
                    <StatLabel>{label}</StatLabel>
                  </div>
                </StatCard>
              ))}
            </StatGrid>
            <Columns>
              <Card>
                <CardHeader>
                  <CardTitle>Delivery Map</CardTitle>
                  <MapLink href="#">View Full Map</MapLink>
                </CardHeader>
                <MapFrame>
                  <DeliveryMap />
                  <ZoomControl>
                    <ZoomButton type="button" aria-label="Zoom in">+</ZoomButton>
                    <ZoomButton type="button" aria-label="Zoom out">−</ZoomButton>
                  </ZoomControl>
                  <Attribution>
                    <a href="#">
                      <svg width="12" height="8" aria-hidden="true">
                        <rect width="12" height="4" fill="#5a7bdf" />
                        <rect y="4" width="12" height="4" fill="#f6d648" />
                      </svg>
                      Leaflet
                    </a>
                    <span>|</span>
                    <span>© OpenStreetMap contributors</span>
                  </Attribution>
                </MapFrame>
              </Card>
              <Card>
                <SpacedTitle>Recent Deliveries</SpacedTitle>
                <Table>
                  <thead>
                    <tr><Th $width="174px">Customer</Th><Th $width="90px">Driver</Th><Th>Completed</Th></tr>
                  </thead>
                  <tbody>
                    {deliveries.map(([customer, driver, time]) => (
                      <tr key={customer}><Td>{customer}</Td><Td>{driver}</Td><Td>{time}</Td></tr>
                    ))}
                  </tbody>
                </Table>
              </Card>
            </Columns>
            <Card>
              <SpacedTitle>Driver Status</SpacedTitle>
              <DriverGrid>
                {drivers.map((d) => (
                  <DriverCard key={d.name}>
                    <DriverName>{d.name}</DriverName>
                    <DriverFacts>
                      <Fact><PackageCheck size={24} />{d.bags} bags delivered</Fact>
                      <Fact><CircleCheckBig size={24} />{d.completed} completed</Fact>
                      <Fact><Truck size={24} />{d.assigned} assigned</Fact>
                    </DriverFacts>
                    <Track><Fill style={{ width: `${d.total ? (d.bags / d.total) * 100 : 0}%` }} /></Track>
                    <DriverCaption>{d.bags} / {d.total} bags delivered</DriverCaption>
                  </DriverCard>
                ))}
              </DriverGrid>
            </Card>
          </Stack>
          <MenuPicker>
            <MenuSelect aria-label="More options" />
            <ChevronDown size={10} strokeWidth={3} />
          </MenuPicker>
        </Main>
      </Shell>
    </>
  );
}
